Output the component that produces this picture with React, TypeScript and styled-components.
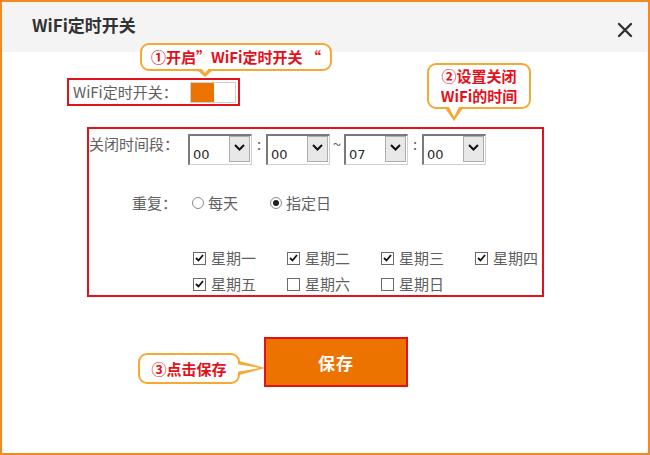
import styled, { createGlobalStyle, css } from "styled-components";

const ORANGE = "#ec7300";
const RED = "#e3111b";
const NOTE = "#f5a834";
const TEXT = "#606060";

const GlobalStyle = createGlobalStyle`
  html, body {
    margin: 0;
    padding: 0;
    background: #fff;
  }
  body {
    font-family: "Noto Sans CJK SC", "Microsoft YaHei", sans-serif;
  }
`;

const Frame = styled.div`
  position: relative;
  width: 650px;
  height: 455px;
  box-sizing: border-box;
  border: 2px solid #f28a22;
  background: #fff;
  display: flex;
  flex-direction: column;
`;

const Header = styled.div`
  height: 50px;
  box-sizing: border-box;
  background: #f4f4f4;
  display: flex;
  justify-content: space-between;
  align-items: flex-start;
  padding: 11px 15px 0 30px;
`;

const Title = styled.h1`
  margin: 0;
  font-size: 17px;
  line-height: 24px;
  font-weight: 700;
  color: #333;
`;

const Close = styled.button`
  margin-top: 9px;
  padding: 0;
  border: 0;
  background: transparent;
  width: 16px;
  height: 16px;
  display: flex;
`;

const Body = styled.div`
  display: flex;
  flex-direction: column;
  align-items: flex-start;
`;

const SwitchBox = styled.div`
  margin: 26px 0 0 65px;
  width: 173px;
  height: 28px;
  box-sizing: border-box;
  border: 2px solid ${RED};
  display: flex;
  align-items: center;
  padding: 0 2px 0 4px;
`;

const FieldLabel = styled.span`
  font-size: 15px;
  line-height: 20px;
  color: ${TEXT};
  white-space: nowrap;
`;

const Toggle = styled.div<{ $on: boolean }>`
  margin-left: auto;
  width: 46px;
  height: 21px;
  box-sizing: border-box;
  border: 1px solid #cfcfcf;
  background: #fff;
  display: flex;
  justify-content: ${({ $on }) => ($on ? "flex-start" : "flex-end")};
`;

const ToggleKnob = styled.div`
  width: 23px;
  height: 100%;
  background: ${ORANGE};
`;

const FormBox = styled.div`
  margin: 21px 0 0 85px;
  width: 457px;
  height: 170px;
  box-sizing: border-box;
  border: 2px solid ${RED};
  padding-top: 5px;
  display: flex;
  flex-direction: column;
`;

const Row = styled.div<{ $top?: number; $align?: string }>`
  display: flex;
  align-items: ${({ $align }) => $align ?? "flex-start"};
  margin-top: ${({ $top }) => $top ?? 0}px;
`;

const RowLabel = styled(FieldLabel)`
  width: 99px;
  box-sizing: border-box;
  padding-right: 11px;
  text-align: right;
`;

const SelectBox = styled.div`
  width: 64px;
  height: 31px;
  box-sizing: border-box;
  border-top: 2px solid #7a7a7a;
  border-left: 2px solid #7a7a7a;
  border-right: 1px solid #d0d0d0;
  border-bottom: 1px solid #d0d0d0;
  background: #fff;
  display: flex;
`;

const SelectValue = styled.span`
  flex: 1;
  padding: 12px 0 0 3px;
  font-family: "DejaVu Sans", Verdana, sans-serif;
  font-size: 13px;
  line-height: 14px;
  color: #2a2a2a;
`;

const SelectArrow = styled.span`
  width: 21px;
  margin: 0 1px 2px 0;
  box-sizing: border-box;
  border: 1px solid #adadad;
  background: #e8e8e8;
  display: flex;
  align-items: center;
  justify-content: center;
  padding-bottom: 4px;
`;

const Sep = styled.span`
  width: 14px;
  text-align: center;
  font-size: 15px;
  line-height: 20px;
  color: ${TEXT};
`;

const RadioGroup = styled.div`
  margin-left: 4px;
  display: flex;
  gap: 32px;
`;

const Option = styled.label`
  display: flex;
  align-items: center;
  gap: 4px;
`;

const Radio = styled.span<{ $checked: boolean }>`
  width: 12px;
  height: 12px;
  box-sizing: border-box;
  border: 1px solid #8a8a8a;
  border-radius: 50%;
  background: #fff;
  display: flex;
  align-items: center;
  justify-content: center;
  &::after {
    content: "";
    width: 6px;
    height: 6px;
    border-radius: 50%;
    background: ${({ $checked }) => ($checked ? "#222" : "transparent")};
  }
`;

const DayGrid = styled.div`
  margin: 35px 0 0 104px;
  display: grid;
  grid-template-columns: repeat(4, 94px);
  row-gap: 6px;
`;

const Check = styled.span`
  width: 13px;
  height: 13px;
  box-sizing: border-box;
  border: 1px solid #6a6a6a;
  background: #fff;
  display: flex;
  align-items: center;
  justify-content: center;
  margin-right: 1px;
`;

const SaveButton = styled.button`
  margin: 40px 0 0 262px;
  width: 144px;
  height: 50px;
  box-sizing: border-box;
  border: 2px solid ${RED};
  background: ${ORANGE};
  color: #fff;
  font-family: inherit;
  font-size: 17px;
  font-weight: 700;
  letter-spacing: 1px;
`;

const tailDown = (x: number, w: number, h: number) => css`
  &::before,
  &::after {
    content: "";
    position: absolute;
    width: 0;
    height: 0;
    border-style: solid;
    border-color: transparent;
  }
  &::before {
    left: ${x - w / 2}px;
    top: calc(100% + 1px);
    border-width: ${h}px ${w / 2}px 0 ${w / 2}px;
    border-top-color: ${NOTE};
  }
  &::after {
    left: ${x - w / 2 + 3}px;
    top: calc(100% - 2px);
    border-width: ${h - 1}px ${w / 2 - 3}px 0 ${w / 2 - 3}px;
    border-top-color: #fff;
  }
`;

const tailRight = (y: number, w: number, h: number) => css`
  &::before,
  &::after {
    content: "";
    position: absolute;
    width: 0;
    height: 0;
    border-style: solid;
    border-color: transparent;
  }
  &::before {
    top: ${y - h / 2}px;
    left: calc(100% + 1px);
    border-width: ${h / 2}px 0 ${h / 2}px ${w}px;
    border-left-color: ${NOTE};
  }
  &::after {
    top: ${y - h / 2 + 3}px;
    left: calc(100% - 2px);
    border-width: ${h / 2 - 3}px 0 ${h / 2 - 3}px ${w - 2}px;
    border-left-color: #fff;
  }
`;

const Callout = styled.div<{
  $left: number;
  $top: number;
  $w: number;
  $h: number;
  $tail: "down" | "right";
  $at: number;
  $tw: number;
  $th: number;
}>`
  position: absolute;
  left: ${({ $left }) => $left}px;
  top: ${({ $top }) => $top}px;
  width: ${({ $w }) => $w}px;
  height: ${({ $h }) => $h}px;
  box-sizing: border-box;
  border: 2px solid ${NOTE};
  border-radius: 9px;
  background: #fff;
  display: flex;
  flex-direction: column;
  align-items: center;
  justify-content: center;
  color: ${RED};
  font-size: 15px;
  font-weight: 700;
  line-height: 20px;
  white-space: nowrap;
  ${({ $tail, $at, $tw, $th }) =>
    $tail === "down" ? tailDown($at, $tw, $th) : tailRight($at, $th, $tw)}
`;

const Chevron = () => (
  <svg width="11" height="7" viewBox="0 0 11 7">
    <polyline points="1,1 5.5,5.5 10,1" fill="none" stroke="#111" strokeWidth="2" />
  </svg>
);

const Select = ({ value }: { value: string }) => (
  <SelectBox>
    <SelectValue>{value}</SelectValue>
    <SelectArrow>
      <Chevron />
    </SelectArrow>
  </SelectBox>
);

const Day = ({ label, checked }: { label: string; checked: boolean }) => (
  <Option>
    <Check>
      {checked && (
        <svg width="9" height="8" viewBox="0 0 9 8">
          <polyline points="1,4 3.5,6.5 8,1" fill="none" stroke="#111" strokeWidth="1.8" />
        </svg>
      )}
    </Check>
    <FieldLabel>{label}</FieldLabel>
  </Option>
);

const days = [
  { label: "星期一", checked: true },
  { label: "星期二", checked: true },
  { label: "星期三", checked: true },
  { label: "星期四", checked: true },
  { label: "星期五", checked: true },
  { label: "星期六", checked: false },
  { label: "星期日", checked: false },
];

export default function App() {
  return (
    <>
      <GlobalStyle />
      <Frame>
        <Header>
          <Title>WiFi定时开关</Title>
          <Close aria-label="close">
            <svg width="16" height="16" viewBox="0 0 16 16">
              <path d="M2 2 L14 14 M14 2 L2 14" stroke="#2f3236" strokeWidth="2.4" strokeLinecap="round" />
            </svg>
          </Close>
        </Header>

        <Body>
          <SwitchBox>
            <FieldLabel>WiFi定时开关：</FieldLabel>
            <Toggle $on>
              <ToggleKnob />
            </Toggle>
          </SwitchBox>

          <FormBox>
            <Row>
              <RowLabel>关闭时间段：</RowLabel>
              <Select value="00" />
              <Sep>:</Sep>
              <Select value="00" />
              <Sep>~</Sep>
              <Select value="07" />
              <Sep>:</Sep>
              <Select value="00" />
            </Row>

            <Row $top={28} $align="center">
              <RowLabel>重复：</RowLabel>
              <RadioGroup>
                <Option>
                  <Radio $checked={false} />
                  <FieldLabel>每天</FieldLabel>
                </Option>
                <Option>
                  <Radio $checked />
                  <FieldLabel>指定日</FieldLabel>
                </Option>
              </RadioGroup>
            </Row>

            <DayGrid>
              {days.map((d) => (
                <Day key={d.label} label={d.label} checked={d.checked} />
              ))}
            </DayGrid>
          </FormBox>

          <SaveButton>保存</SaveButton>
        </Body>

        <Callout $left={138} $top={41} $w={192} $h={28} $tail="down" $at={63} $tw={16} $th={7}>
          ①开启”WiFi定时开关 “
        </Callout>
        <Callout $left={425} $top={61} $w={104} $h={46} $tail="down" $at={25} $tw={18} $th={13}>
          <span>②设置关闭</span>
          <span>WiFi的时间</span>
        </Callout>
        <Callout $left={136} $top={351} $w={102} $h={31} $tail="right" $at={13} $tw={14} $th={26}>
          ③点击保存
        </Callout>
      </Frame>
    </>
  );
}
